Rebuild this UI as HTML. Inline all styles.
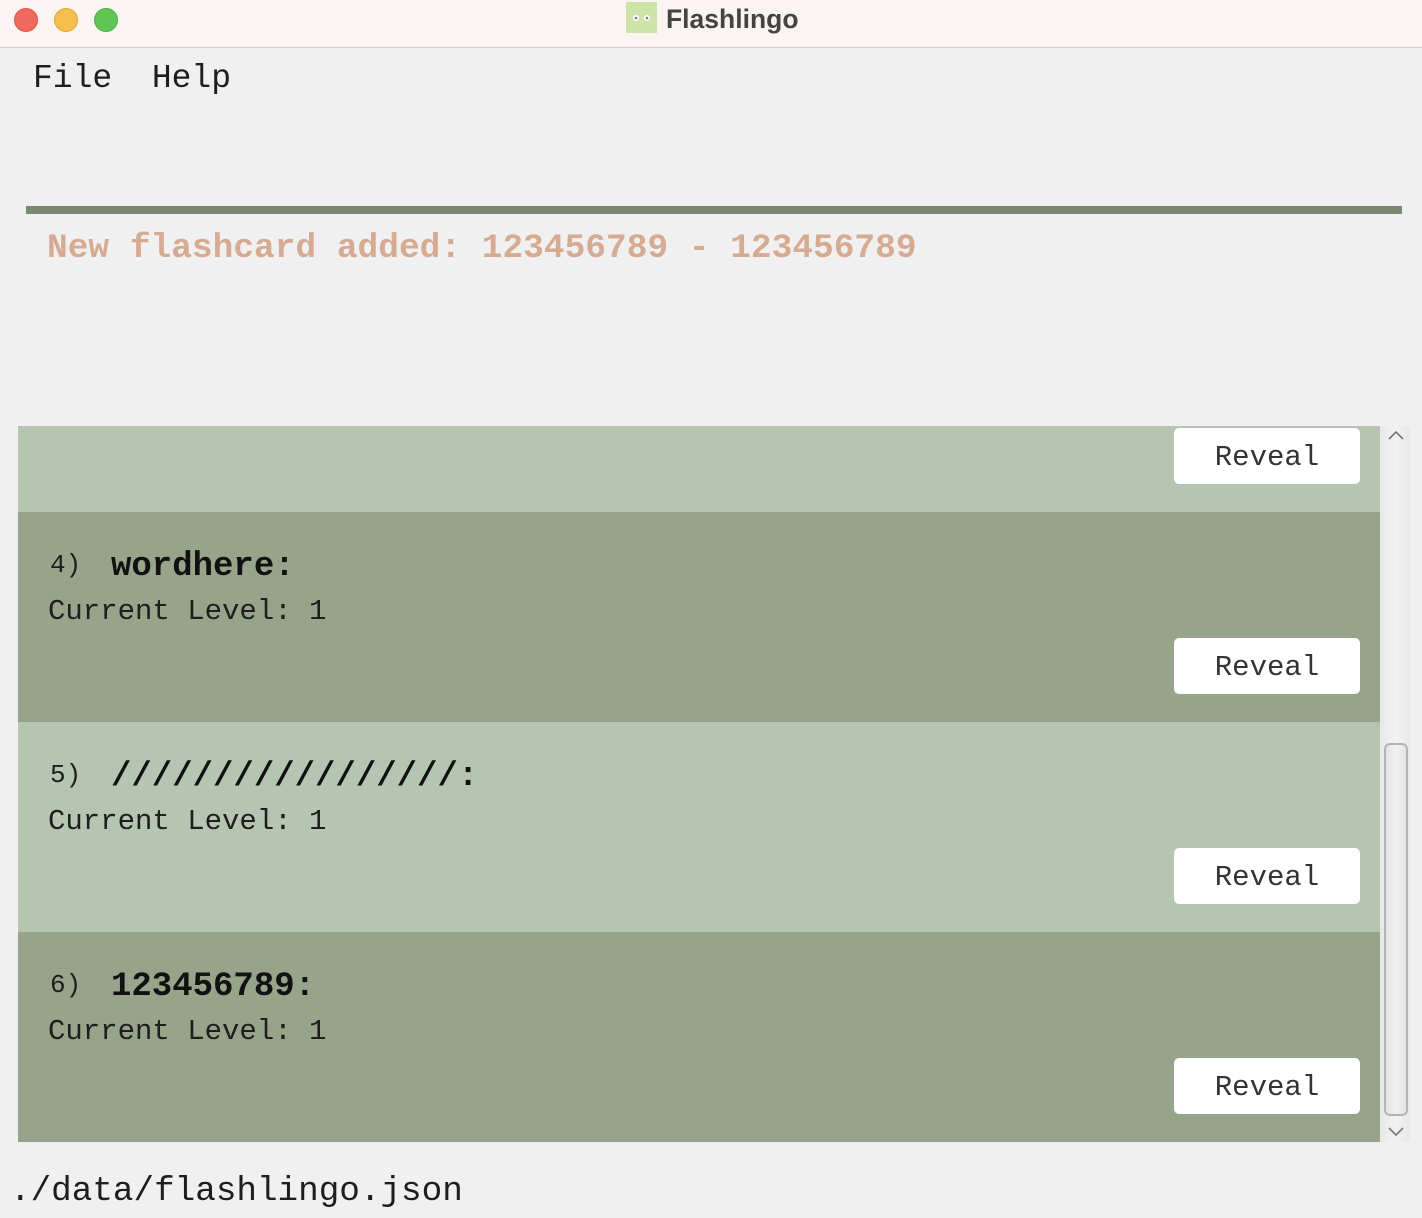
<!DOCTYPE html>
<html><head><meta charset="utf-8"><style>
*{margin:0;padding:0;box-sizing:border-box}
body{width:1422px;height:1218px;background:#f0f0f0;position:relative;overflow:hidden;font-family:"Liberation Mono",monospace;color:#1e1e1e}
.a{position:absolute;white-space:pre}
svg{display:block}
.tb{position:absolute;left:0;top:0;width:1422px;height:48px;background:#faf4f3;border-bottom:1px solid #d4cfcf}
.dot{position:absolute;top:8px;width:24px;height:24px;border-radius:50%}
.card{position:absolute;left:18px;width:1362px;height:210px}
.l{background:#b5c5b2}.d{background:#97a48a}
.btn{position:absolute;left:1174px;width:186px;height:56px;background:#fff;border-radius:5px;font-size:29px;line-height:60px;text-align:center;color:#333}
</style></head><body>
<div class="tb">
<div class="dot" style="left:14px;background:#ee6a5e;border:1px solid #d85549"></div>
<div class="dot" style="left:54px;background:#f5be4f;border:1px solid #dea63b"></div>
<div class="dot" style="left:94px;background:#61c554;border:1px solid #4fae43"></div>
<div style="position:absolute;left:626px;top:2px;width:31px;height:31px;background:#cfe3a8"><svg width="31" height="31"><circle cx="10" cy="16" r="3" fill="#fff"/><circle cx="21" cy="16" r="3" fill="#fff"/><circle cx="10" cy="16" r="1.3" fill="#777"/><circle cx="21" cy="16" r="1.3" fill="#777"/></svg></div>
<div class="a" style="left:666px;top:4px;font-family:'Liberation Sans',sans-serif;font-weight:bold;font-size:26.5px;line-height:30px;color:#444">Flashlingo</div>
</div>
<div class="a" style="left:33px;top:63px;font-size:33px;line-height:32px">File  Help</div>
<div class="a" style="left:26px;top:206px;width:1376px;height:8px;background:#7b8a6e"></div>
<div class="a" style="left:47px;top:231px;font-size:34.5px;line-height:36px;font-weight:bold;color:#d6ab92">New flashcard added: 123456789 - 123456789</div>

<div class="a" style="left:18px;top:426px;width:1362px;height:86px;background:#b5c5b2"></div>
<div class="btn" style="top:428px">Reveal</div>

<div class="card d" style="top:512px"></div>
<div class="a" style="left:50px;top:552px;font-size:26px;line-height:26px">4)</div>
<div class="a" style="left:111px;top:550px;font-size:34px;line-height:34px;font-weight:bold;color:#111">wordhere:</div>
<div class="a" style="left:48px;top:597px;font-size:29px;line-height:30px">Current Level: 1</div>
<div class="btn" style="top:638px">Reveal</div>

<div class="card l" style="top:722px"></div>
<div class="a" style="left:50px;top:762px;font-size:26px;line-height:26px">5)</div>
<div class="a" style="left:111px;top:760px;font-size:34px;line-height:34px;font-weight:bold;color:#111">/////////////////:</div>
<div class="a" style="left:48px;top:807px;font-size:29px;line-height:30px">Current Level: 1</div>
<div class="btn" style="top:848px">Reveal</div>

<div class="card d" style="top:932px"></div>
<div class="a" style="left:50px;top:972px;font-size:26px;line-height:26px">6)</div>
<div class="a" style="left:111px;top:970px;font-size:34px;line-height:34px;font-weight:bold;color:#111">123456789:</div>
<div class="a" style="left:48px;top:1017px;font-size:29px;line-height:30px">Current Level: 1</div>
<div class="btn" style="top:1058px">Reveal</div>

<div class="a" style="left:1380px;top:426px;width:30px;height:716px;background:linear-gradient(90deg,#e8e8e8,#f2f2f2,#e8e8e8)"></div>
<svg class="a" style="left:1386px;top:429px" width="20" height="14"><path d="M3 10 L10 3 L17 10" stroke="#777" stroke-width="1.6" fill="none"/></svg>
<svg class="a" style="left:1386px;top:1124px" width="20" height="14"><path d="M3 4 L10 11 L17 4" stroke="#777" stroke-width="1.6" fill="none"/></svg>
<div class="a" style="left:1384px;top:743px;width:24px;height:373px;border:2px solid #b4b4b4;border-radius:6px;background:linear-gradient(90deg,#e4e4e4,#f0f0f0,#e4e4e4)"></div>

<div class="a" style="left:10px;top:1175px;font-size:34.3px;line-height:34px">./data/flashlingo.json</div>
</body></html>
